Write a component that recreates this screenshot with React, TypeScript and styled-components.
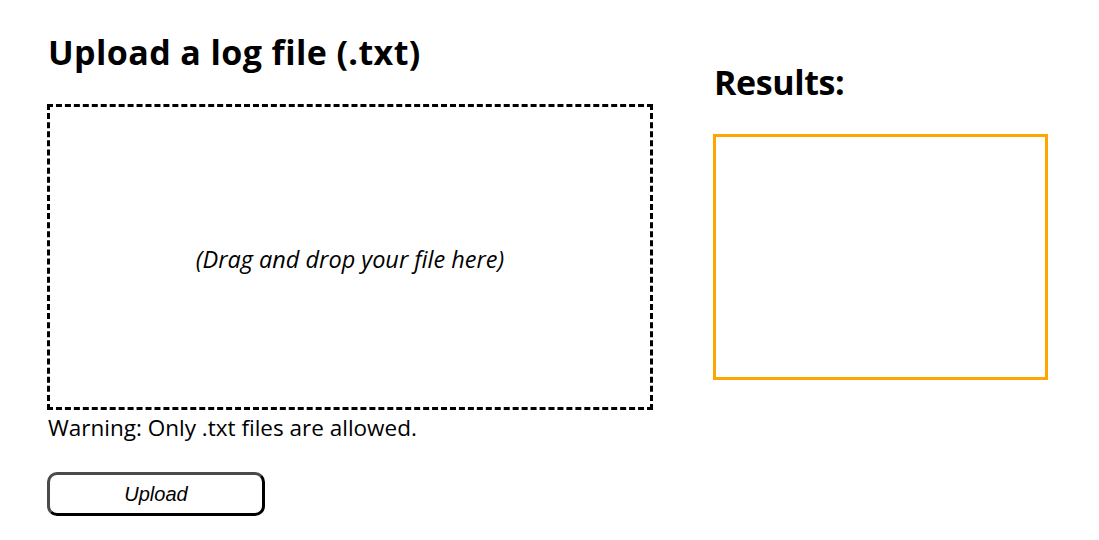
import React from "react";
import styled, { createGlobalStyle } from "styled-components";

const Global = createGlobalStyle`
  html, body { margin: 0; padding: 0; background: #fff; }
  body { font-family: "Open Sans", "Noto Sans", sans-serif; color: #000; }
`;

const Page = styled.div`
  display: flex;
  align-items: flex-start;
  gap: 60px;
  padding: 31px 0 0 47px;
`;

const LeftColumn = styled.section`
  display: flex;
  flex-direction: column;
  width: 606px;
`;

const RightColumn = styled.section`
  display: flex;
  flex-direction: column;
  width: 335px;
  margin-top: 30px;
`;

const Heading = styled.h1<{ $spacing?: number }>`
  margin: 0 0 0 1px;
  font-size: 34px;
  line-height: 42px;
  font-weight: 700;
  letter-spacing: ${(p) => p.$spacing ?? 0}px;
`;

const DropZone = styled.div`
  box-sizing: border-box;
  margin-top: 31px;
  height: 306px;
  border: 3px dashed #000;
  display: flex;
  align-items: center;
  justify-content: center;
`;

const DropHint = styled.span`
  font-size: 23.5px;
  font-style: italic;
  padding-top: 4px;
`;

const Warning = styled.p`
  margin: 3px 0 0 1px;
  font-size: 22.5px;
  line-height: 30px;
`;

const UploadButton = styled.button`
  box-sizing: border-box;
  margin-top: 29px;
  width: 218px;
  height: 44px;
  border-width: 3px;
  border-style: solid;
  border-color: #4a4a4a #000 #000 #4a4a4a;
  border-radius: 10px;
  background: #fff;
  font-family: "Liberation Sans", Arial, sans-serif;
  font-style: italic;
  font-size: 20px;
  color: #000;
  cursor: pointer;
`;

const ResultsBox = styled.div`
  box-sizing: border-box;
  margin-top: 31px;
  height: 246px;
  border: 3px solid #ffa500;
`;

export default function App() {
  return (
    <>
      <Global />
      <Page>
        <LeftColumn>
          <Heading $spacing={0.4}>Upload a log file (.txt)</Heading>
          <DropZone>
            <DropHint>(Drag and drop your file here)</DropHint>
          </DropZone>
          <Warning>Warning: Only .txt files are allowed.</Warning>
          <UploadButton type="button">Upload</UploadButton>
        </LeftColumn>
        <RightColumn>
          <Heading $spacing={-0.4}>Results:</Heading>
          <ResultsBox />
        </RightColumn>
      </Page>
    </>
  );
}
